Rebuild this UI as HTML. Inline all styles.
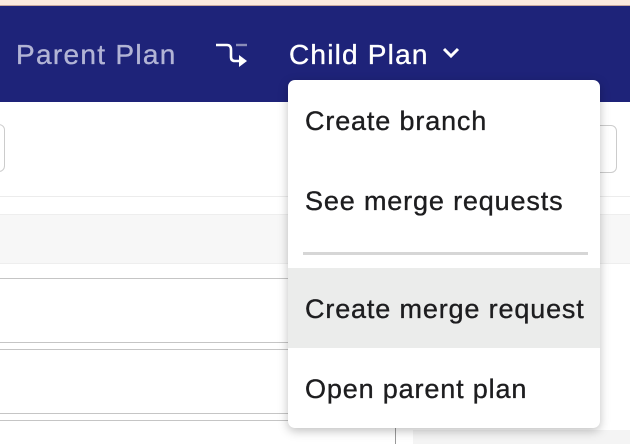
<!DOCTYPE html>
<html><head><style>
body{margin:0;width:630px;height:444px;overflow:hidden;background:#fff;font-family:"Liberation Sans",sans-serif;position:relative}
.a{position:absolute}
.item{position:absolute;left:0;width:312px;height:80px;line-height:82px;padding-left:17px;box-sizing:border-box;font-size:27px;color:#1d1d1f;letter-spacing:0.85px;-webkit-text-stroke:0.35px #1d1d1f}
</style></head><body>
<div class="a" style="left:0;top:0;width:630px;height:5px;background:#fbeadf"></div>
<div class="a" style="left:0;top:5px;width:630px;height:1px;background:#c9a9a0"></div>
<div class="a" style="left:0;top:6px;width:630px;height:96px;background:#1e2379"></div>
<div class="a" style="left:16px;top:39px;font-size:28px;color:#b2b4d5;letter-spacing:1.3px;-webkit-text-stroke:0.35px #b2b4d5">Parent Plan</div>
<svg class="a" style="left:212px;top:38px" width="40" height="30" viewBox="0 0 40 30">
<path d="M4 7 H15 Q19 7 19 12 V19 Q19 23 23 23 H28" fill="none" stroke="#fff" stroke-width="2.6"/>
<path d="M27 17 L35 23 L27 29 Z" fill="#fff"/>
<path d="M24 7 H35" stroke="#8a8db8" stroke-width="2.4"/>
</svg>
<div class="a" style="left:289px;top:39px;font-size:28px;color:#fff;letter-spacing:1.2px;-webkit-text-stroke:0.35px #fff">Child Plan</div>
<svg class="a" style="left:441px;top:45px" width="22" height="16" viewBox="0 0 22 16"><path d="M3 4 L10 11 L17 4" fill="none" stroke="#fff" stroke-width="3"/></svg>
<div class="a" style="left:-10px;top:124px;width:13px;height:46px;border:1px solid #ccc;border-radius:6px"></div>
<div class="a" style="left:600px;top:125px;width:16px;height:46px;border:1px solid #ccc;border-left:none;border-radius:0 6px 6px 0"></div>
<div class="a" style="left:0;top:196px;width:630px;height:1px;background:#ececec"></div>
<div class="a" style="left:0;top:214px;width:630px;height:48px;background:#f7f7f7;border-top:1px solid #eee;border-bottom:1px solid #eee"></div>
<div class="a" style="left:0;top:278px;width:400px;height:1px;background:#c5c5c5"></div>
<div class="a" style="left:0;top:342px;width:400px;height:1px;background:#c5c5c5"></div>
<div class="a" style="left:0;top:349px;width:400px;height:1px;background:#c5c5c5"></div>
<div class="a" style="left:0;top:413px;width:400px;height:1px;background:#c5c5c5"></div>
<div class="a" style="left:0;top:420px;width:400px;height:1px;background:#c5c5c5"></div>
<div class="a" style="left:395px;top:420px;width:1px;height:24px;background:#999"></div>
<div class="a" style="left:413px;top:430px;width:217px;height:14px;background:#f4f4f4"></div>
<div class="a" style="left:288px;top:80px;width:312px;height:348px;background:#fff;border-radius:7px;box-shadow:0 3px 10px rgba(0,0,0,0.25);overflow:hidden">
<div class="item" style="top:0">Create branch</div>
<div class="item" style="top:80px">See merge requests</div>
<div class="a" style="left:15px;top:172px;width:285px;height:3px;background:#d6d6d6"></div>
<div class="item" style="top:188px;background:#ebeceb">Create merge request</div>
<div class="item" style="top:268px">Open parent plan</div>
</div>
</body></html>
